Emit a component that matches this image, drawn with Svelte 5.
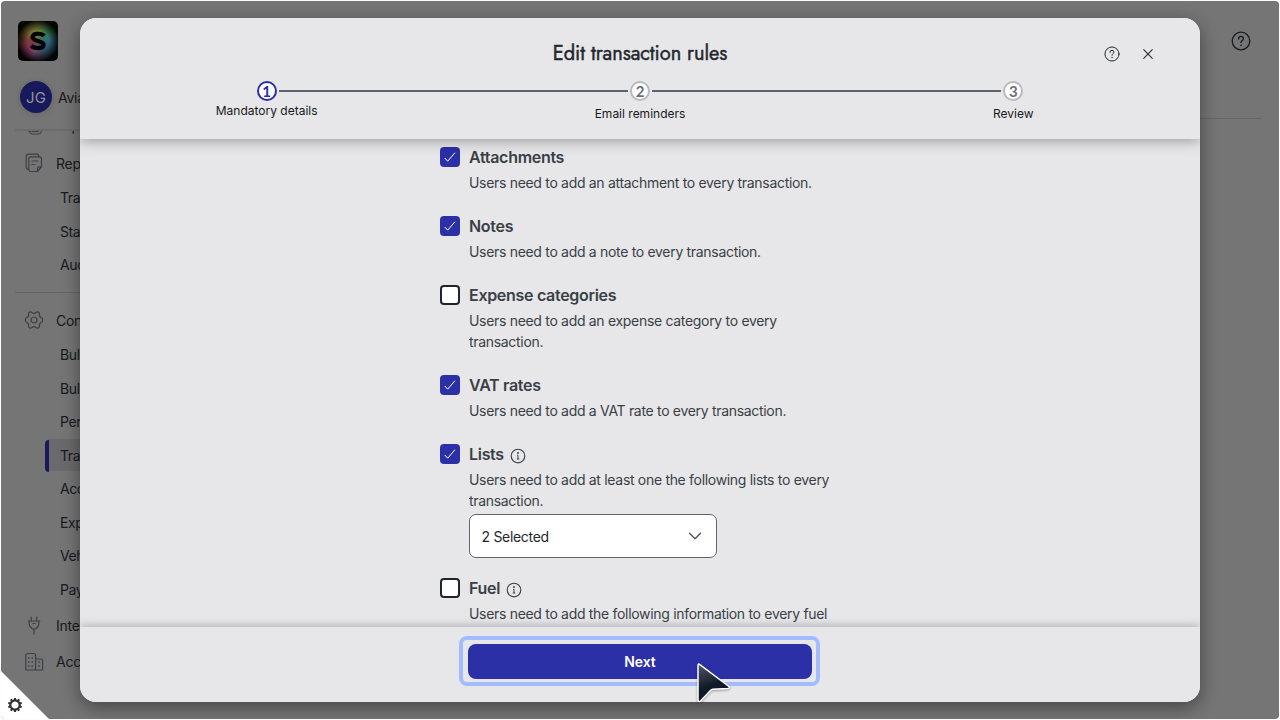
<script>
  const steps = [
    { n: 1, label: 'Mandatory details', active: true },
    { n: 2, label: 'Email reminders' },
    { n: 3, label: 'Review' }
  ];
  const rules = [
    { title: 'Attachments', text: ['Users need to add an attachment to every transaction.'], on: true },
    { title: 'Notes', text: ['Users need to add a note to every transaction.'], on: true },
    { title: 'Expense categories', text: ['Users need to add an expense category to every', 'transaction.'], on: false },
    { title: 'VAT rates', text: ['Users need to add a VAT rate to every transaction.'], on: true },
    { title: 'Lists', text: ['Users need to add at least one the following lists to every', 'transaction.'], on: true, info: true, select: '2 Selected' },
    { title: 'Fuel', text: ['Users need to add the following information to every fuel'], on: false, info: true }
  ];
  const reports = ['Tra', 'Stat', 'Aud'];
  const config = ['Bulk', 'Bulk', 'Per', 'Tra', 'Acc', 'Exp', 'Veh', 'Pay'];
  const teeth = [0, 36, 72, 108, 144, 180, 216, 252, 288, 324];
</script>

{#snippet help(size, weight)}
  <svg width={size} height={size} viewBox="0 0 20 20" fill="none" stroke="currentColor" stroke-width={weight} stroke-linecap="round">
    <circle cx="10" cy="10" r="8.800" />
    <path d="M7.600 8V7.700a2.400 2.400 0 0 1 4.800 0c0 1.700-2.400 1.900-2.400 3.900" />
    <circle cx="10" cy="14.300" r=".45" fill="currentColor" stroke-width=".6" />
  </svg>
{/snippet}

<div class="screen">
  <aside>
    <div class="logo">
      <svg width="40" height="40" viewBox="0 0 40 40" fill="none">
        <path d="M26.100 15C24 12.300 15 11.300 14.600 16c-.4 4.800 11.400 3 11 8-.3 4.300-9.700 3.500-12.300.8" stroke="#000" stroke-width="4.200" />
      </svg>
    </div>
    <div class="account"><span class="avatar">JG</span><span class="company">Avia</span></div>
    <nav>
      <div class="row first">
        <svg width="20" height="20" viewBox="0 0 20 20" fill="none" stroke="currentColor"><rect x="2.500" y="5.500" width="13" height="8.500" rx="2" /><rect x="5.500" y="8" width="12" height="9" rx="3" /><path d="M8 14.500h7" /></svg>
        <span>Exp</span>
      </div>
      <div class="row">
        <svg width="20" height="20" viewBox="0 0 20 20" fill="none" stroke="currentColor" stroke-width="1.200" stroke-linecap="round" stroke-linejoin="round">
          <path d="M4.300 16.300H4.200A2 2 0 0 1 2.200 14.300V3.200a2 2 0 0 1 2-2h8.600a2 2 0 0 1 2 2" />
          <path d="M6.800 3.800h8.700a2 2 0 0 1 2 2v8l-4 4.700H6.800a2 2 0 0 1-2-2V5.800a2 2 0 0 1 2-2zM17.300 13.900h-2.400a1.400 1.400 0 0 0-1.400 1.400v2.900M8 8h6M8 11.500h3" />
        </svg>
        <span>Rep</span>
      </div>
      {#each reports as item}<div class="sub">{item}</div>{/each}
      <hr />
      <div class="row">
        <svg width="20" height="20" viewBox="0 0 20 20" fill="none" stroke="currentColor" stroke-width="1.200" stroke-linejoin="round">
          <path d="M5.900 2.100Q6.700 1.600 7.500 2.200Q10 4.400 12.500 2.200Q13.300 1.600 14.100 2.100L14.900 2.600Q15.600 3.100 15.400 4Q14.900 6.900 17.500 7.800Q18.500 8.200 18.500 9.100V10.900Q18.500 11.800 17.500 12.200Q14.900 13.100 15.400 16Q15.600 16.900 14.900 17.400L14.100 17.900Q13.300 18.400 12.500 17.800Q10 15.600 7.500 17.800Q6.700 18.400 5.900 17.900L5.100 17.400Q4.400 16.900 4.600 16Q5.100 13.100 2.500 12.200Q1.500 11.800 1.500 10.900V9.100Q1.500 8.200 2.500 7.800Q5.100 6.900 4.600 4Q4.400 3.100 5.100 2.600Z" />
          <circle cx="10" cy="10" r="3" />
        </svg>
        <span>Con</span>
      </div>
      {#each config as item, i}<div class="sub" class:current={i === 3}>{item}</div>{/each}
      <div class="row tail">
        <svg width="20" height="20" viewBox="0 0 20 20" fill="none" stroke="currentColor" stroke-width="1.200" stroke-linecap="round" stroke-linejoin="round">
          <path d="M7.300 1.200V5M12.700 1.200V5M4.200 5h11.600M5.200 5v3.200c0 2 1.500 3.400 3.300 4.800h3c1.800-1.400 3.300-2.800 3.300-4.800V5M10 13v5M9 7.500h2" />
        </svg>
        <span>Inte</span>
      </div>
      <div class="row">
        <svg width="20" height="20" viewBox="0 0 20 20" fill="none" stroke="currentColor" stroke-width="1.200" stroke-linejoin="round">
          <path d="M1.800 18V3.500a2 2 0 0 1 2-2h5.800a2 2 0 0 1 2 2V18zM11.600 7h5a2 2 0 0 1 2 2v9h-7M1.800 18h16.800" />
          <path d="M4 6h1.500M7.500 6H9M4 10h1.500M7.500 10H9M4 14h1.500M7.500 14H9M14.300 10h1.500M14.300 14h1.500" stroke-width="1.500" />
        </svg>
        <span>Acc</span>
      </div>
    </nav>
  </aside>
  <main><div class="topbar">{@render help(20, 1.3)}</div></main>

  <section class="modal">
    <header>
      <h1>Edit transaction rules</h1>
      <div class="tools">
        {@render help(16, 1.25)}
        <svg width="16" height="16" viewBox="0 0 16 16" fill="none" stroke="currentColor" stroke-width="1.050" stroke-linecap="round"><path d="M3.700 3.700l8.600 8.600M12.300 3.700l-8.600 8.600" /></svg>
      </div>
      <div class="stepper">
        {#each steps as s}
          <div class="step" class:active={s.active}>
            <div class="track"><i></i><b>{s.n}</b><i></i></div>
            <span>{s.label}</span>
          </div>
        {/each}
      </div>
    </header>
    <div class="body">
      {#each rules as r}
        <div class="rule">
          <div class="box" class:on={r.on}>
            {#if r.on}<svg width="20" height="20" viewBox="0 0 20 20" fill="none" stroke="#fff" stroke-width="1" stroke-linecap="round" stroke-linejoin="round"><path d="M5 11.300l2.700 2.900L14.700 6" /></svg>{/if}
          </div>
          <div class="content">
            <h2>{r.title}
              {#if r.info}<svg width="16" height="16" viewBox="0 0 16 16" fill="none" stroke="currentColor" stroke-width="1.150"><circle cx="8" cy="8" r="6.800" /><path d="M7.200 7.300H8V11M6.800 11h2.400" stroke-width="1" /><circle cx="8" cy="5" r=".4" /></svg>{/if}
            </h2>
            <p>{#each r.text as line}<span>{line}</span>{/each}</p>
            {#if r.select}
              <div class="select"><span>{r.select}</span><svg width="14" height="14" viewBox="0 0 14 14" fill="none" stroke="#4b4f58" stroke-width="1.250" stroke-linecap="round" stroke-linejoin="round"><path d="M1.500 3.200l5.500 5.500L12.500 3.200" /></svg></div>
            {/if}
          </div>
        </div>
      {/each}
    </div>
    <footer><button>Next</button></footer>
  </section>

  <div class="corner">
    <svg width="48" height="48" viewBox="0 0 48 48">
      <path d="M0 0L48 48H0Z" fill="#fff" />
      <g transform="translate(14 34)">
        <circle r="4.700" fill="none" stroke="#333" stroke-width="2.200" />
        {#each teeth as a}<rect x="-1.100" y="-7" width="2.200" height="2.300" rx=".3" fill="#333" transform="rotate({a})" />{/each}
      </g>
    </svg>
  </div>
  <svg class="cursor" width="40" height="46" viewBox="0 0 40 46">
    <defs><linearGradient id="arrow" x1="0" y1="0" x2=".3" y2="1"><stop offset="0" stop-color="#505866" /><stop offset=".65" stop-color="#111827" /></linearGradient></defs>
    <path d="M4 5.500Q4 3 6.200 4.800L34.300 26Q36.800 28.200 33.500 28.500L18.800 29.200Q17.500 29.400 16.700 30.200L7 40.500Q4.200 43 4 39.500Z" fill="url(#arrow)" stroke="#fff" stroke-width="1.500" stroke-linejoin="round" />
  </svg>
</div>

<style>
  :global(body) { background: #fcfcfc; overflow: hidden; }
  * { box-sizing: border-box; }
  svg { flex: none; display: block; }
  .screen { position: relative; display: flex; width: 1278px; height: 718px; margin: 1px; border-radius: 4px; overflow: hidden; background: #757575; font-family: Inter, sans-serif; }
  aside { width: 200px; display: flex; flex-direction: column; color: #171a20; font-size: 14px; letter-spacing: -.25px; }
  .logo { width: 40px; height: 40px; margin: 20px 0 0 17px; border-radius: 5px; overflow: hidden; background: radial-gradient(circle at 50% 50%, transparent 38%, rgba(0,0,0,.95) 74%), conic-gradient(from 0deg, #6f7536, #397644, #316d79, #2e5673, #374c60, #74456e, #853050, #764330, #777134, #6f7536); }
  .account { display: flex; align-items: center; gap: 6px; height: 32px; margin: 20px 0 0 19px; }
  .avatar { width: 32px; height: 32px; border-radius: 50%; background: #17195a; color: #92939c; display: grid; place-items: center; font-size: 15px; letter-spacing: 0; box-shadow: 0 1px 6px rgba(0,0,0,.15); }
  nav { height: 588px; margin: 16px 0 0 14px; border-top: 2px solid #6b6b6c; overflow: hidden; }
  .row { height: 36px; display: flex; align-items: center; gap: 12px; padding-left: 9px; }
  .row > svg { width: 20px; color: #3c3f45; }
  .first { margin-top: -22px; }
  .first span { margin-top: -3px; }
  .sub { height: 33.500px; margin-left: 30px; padding-left: 15px; line-height: 34.500px; font-size: 14px; letter-spacing: -.4px; }
  .current { background: linear-gradient(#6a6a6e, #6a6a6e) 0 50% / 100% 32px no-repeat; position: relative; border-radius: 5px; }
  .current::before { content: ""; position: absolute; left: 0; top: 1px; width: 4px; height: 32px; background: #17195f; border-radius: 4px 0 0 4px; }
  hr { border: 0; height: 1px; background: #646465; margin: 10px 0 9.500px; }
  .tail { margin-top: 1.500px; }
  main { flex: 1; }
  .topbar { height: 118px; margin-right: 17px; border-bottom: 1px solid #666; display: flex; justify-content: flex-end; padding: 29.500px 11.500px 0 0; color: #171a20; }

  .modal { position: absolute; z-index: 0; left: 79px; top: 17px; width: 1120px; height: 684px; display: flex; flex-direction: column; background: #e7e7e9; border-radius: 16px; overflow: hidden; color: #3a3f46; box-shadow: 0 5px 18px rgba(0,0,0,.42); }
  header { position: relative; z-index: 1; height: 121px; flex: none; display: grid; grid-template-columns: 1fr auto 1fr; grid-template-rows: 62px 1fr; background: #e7e7e9; box-shadow: 0 1px 14px rgba(0,0,0,.38); color: #23272e; }
  h1 { grid-column: 2; margin: 23px 0 0; font: 400 20px/26px Jost, Lato, sans-serif; letter-spacing: -.03px; white-space: nowrap; -webkit-text-stroke: .45px #23272e; }
  .tools { display: flex; justify-content: flex-end; gap: 20px; padding: 28px 44px 0 0; }
  .stepper { grid-column: 1 / 4; display: flex; }
  .step { flex: 1; display: flex; flex-direction: column; align-items: center; font-size: 12px; color: #171a20; }
  .track { width: 100%; display: flex; align-items: center; gap: 2px; height: 22px; }
  .track i { flex: 1; height: 2px; background: #5e6470; }
  .step:first-child i:first-child, .step:last-child i:last-child { visibility: hidden; }
  .track b { width: 20px; height: 20px; border: 2px solid #b9b9be; border-radius: 50%; background: #fff; color: #6b6e77; display: grid; place-items: center; font: 700 15px/17px Lato, sans-serif; }
  .active b { border-color: #2c30a6; color: #2c30a6; }
  .step > span { margin-top: 3px; line-height: 18px; }
  .step.active > span { margin-top: 0; }
  .body { flex: 1; min-height: 0; overflow: hidden; padding: 8px 0 0 360px; display: flex; flex-direction: column; gap: 22px; }
  .rule { display: flex; gap: 9px; flex: none; }
  .box { width: 20px; height: 20px; flex: none; border: 2px solid #20242b; border-radius: 4px; background: #fff; }
  .on { border: 0; background: #2c30a6; }
  h2 { margin: 0; height: 20px; display: flex; align-items: center; gap: 6px; font-size: 16px; font-weight: 600; line-height: 20px; letter-spacing: -.3px; white-space: nowrap; }
  h2 svg { position: relative; top: 2px; }
  p { margin: 5px 0 0; padding-bottom: 1px; font-size: 14px; line-height: 21px; letter-spacing: -.31px; white-space: nowrap; }
  p span { display: block; }
  .select { width: 248px; height: 44px; margin: 2px 0 -2px; padding: 1px 14px 0 11.500px; display: flex; justify-content: space-between; align-items: center; background: #fff; border: 1px solid #5e6470; border-radius: 7px; color: #23272e; font-size: 14px; letter-spacing: -.3px; }
  footer { position: relative; z-index: 1; height: 75px; flex: none; display: flex; justify-content: center; align-items: flex-start; padding-top: 17px; background: #e7e7e9; box-shadow: 0 -1px 9px rgba(0,0,0,.26); }
  button { position: relative; width: 344px; height: 35px; border: 0; border-radius: 8px; padding: 0; background: #2c30a6; color: #fff; font: 600 14px Inter, sans-serif; letter-spacing: -.1px; }
  button::after { content: ""; position: absolute; inset: -8px -8px -7px -9px; border: 4px solid #a3bbff; border-radius: 8px; }
  .corner { position: absolute; left: 0; bottom: 0; }
  .cursor { position: absolute; left: 693px; top: 659px; filter: drop-shadow(0 1px 1px rgba(0,0,0,.35)); }
</style>
